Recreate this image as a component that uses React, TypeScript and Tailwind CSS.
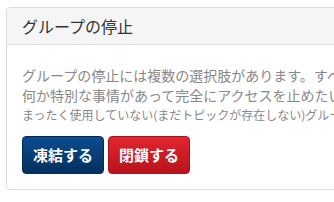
export default function App() {
  return (
    <div
      className="h-[202px] w-[334px] overflow-hidden bg-white pl-[6px] pt-[7px]"
      style={{ fontFamily: '"Noto Sans CJK JP", "Noto Sans", sans-serif' }}
    >
      <div className="w-[640px] rounded-[4px] border border-[#dddddd] bg-white">
        <div className="flex h-[37px] items-center rounded-t-[4px] border-b border-[#dddddd] bg-[#f5f5f5] px-[15px]">
          <h2 className="text-[16px] leading-none text-[#333333]">グループの停止</h2>
        </div>
        <div className="px-[15px] pb-[15px] pt-[20px]">
          <p className="whitespace-nowrap text-[14px] leading-[20px] text-[#888888]">
            グループの停止には複数の選択肢があります。すべての機能を一時的に止めたい場合は「凍結」を選んでください。
          </p>
          <p className="whitespace-nowrap text-[14px] leading-[20px] text-[#888888]">
            何か特別な事情があって完全にアクセスを止めたい場合は「閉鎖」を選んでください。
          </p>
          <p className="whitespace-nowrap text-[12px] leading-[20px] text-[#888888]">
            まったく使用していない(まだトピックが存在しない)グループは削除することもできます。
          </p>
          <div className="mt-[11px] flex gap-[4px]">
            <button className="h-[38px] w-[82px] rounded-[4px] border border-[#022a54] bg-gradient-to-b from-[#0c4d8f] to-[#03305f] text-[15px] font-bold text-white">
              凍結する
            </button>
            <button className="h-[38px] w-[82px] rounded-[4px] border border-[#a8141c] bg-gradient-to-b from-[#e1262f] to-[#b8121c] text-[15px] font-bold text-white">
              閉鎖する
            </button>
          </div>
        </div>
      </div>
    </div>
  );
}
